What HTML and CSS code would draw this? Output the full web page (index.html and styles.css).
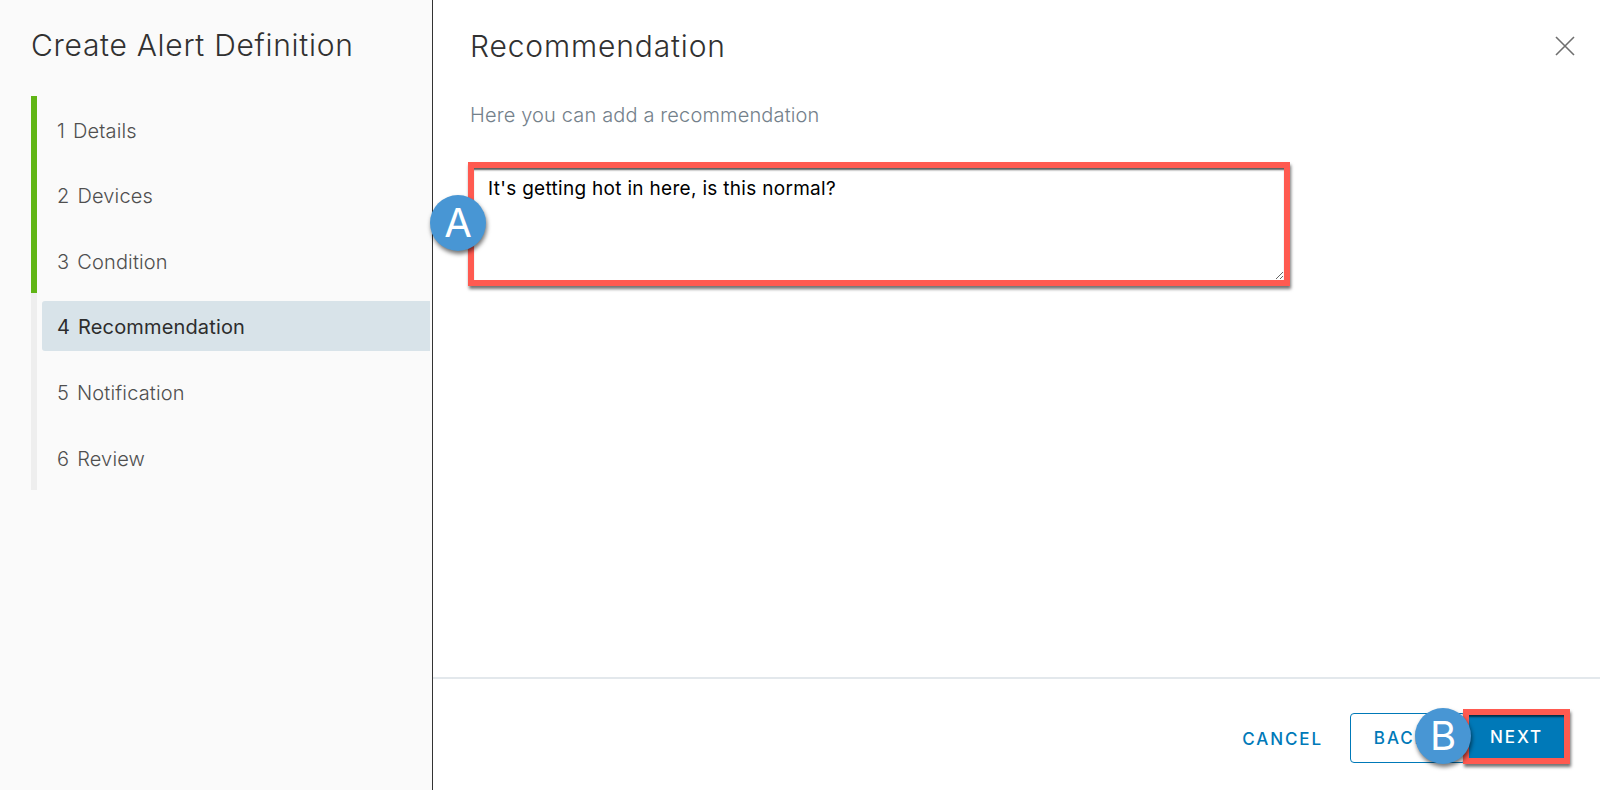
FILE: index.html
```html
<!DOCTYPE html>
<html lang="en">

<head>
    <meta charset="UTF-8">
    <title>Create Alert Definition</title>
    <link rel="stylesheet" href="styles.css">
</head>

<body>
    <div class="wizard">
        <div class="side">
            <h1 class="side-title">Create Alert Definition</h1>
            <ul class="steps">
                <li class="step done"><div class="step-in"><span class="num">1</span>Details</div></li>
                <li class="step done"><div class="step-in"><span class="num">2</span>Devices</div></li>
                <li class="step done"><div class="step-in"><span class="num">3</span>Condition</div></li>
                <li class="step current"><div class="step-in"><span class="num">4</span>Recommendation</div></li>
                <li class="step"><div class="step-in"><span class="num">5</span>Notification</div></li>
                <li class="step"><div class="step-in"><span class="num">6</span>Review</div></li>
            </ul>
        </div>
        <div class="main">
            <div class="content">
                <div class="head">
                    <h2 class="page-title">Recommendation</h2>
                    <svg class="close" width="20" height="20" viewBox="0 0 20 20">
                        <path d="M1 1L19 19M19 1L1 19" stroke="#6f6f6f" stroke-width="1.6" fill="none"/>
                    </svg>
                </div>
                <p class="hint">Here you can add a recommendation</p>
                <textarea class="box-text">It's getting hot in here, is this normal?</textarea>
            </div>
            <div class="foot">
                <button class="btn link">CANCEL</button>
                <button class="btn outline">BACK</button>
                <button class="btn primary">NEXT</button>
            </div>
        </div>
        <!-- annotation markers -->
        <div class="marker marker-a">A</div>
        <div class="marker marker-b">B</div>
    </div>
</body>

</html>
```

FILE: styles.css
```css
* {
    margin: 0;
    padding: 0;
    box-sizing: border-box;
}

ul {
    list-style: none;
}

body {
    font-family: "Inter", "Liberation Sans", sans-serif;
    background-color: #fff;
}

.wizard {
    display: flex;
    width: 1600px;
    height: 790px;
    overflow: hidden;
    position: relative;
}

.side {
    width: 433px;
    flex: none;
    padding: 26px 0 0 31px;
    background-color: #fafafa;
    border-right: 1px solid #333;
}

.side-title {
    font-size: 30px;
    line-height: 38px;
    font-weight: 300;
    letter-spacing: 0.7px;
    color: #313131;
    margin-bottom: 32px;
}

.step {
    height: 65.67px;
    padding: 8px 2px 7px 5px;
    border-left: 6px solid #eeeeee;
    font-size: 20px;
    font-weight: 300;
    letter-spacing: 0.15px;
    color: #4f4f4f;
}

.step.done {
    border-left-color: #60b515;
}

.step-in {
    display: flex;
    align-items: center;
    height: 50px;
    padding: 3px 0 0 15px;
    border-radius: 3px 0 0 3px;
}

.current .step-in {
    background-color: #d8e3e9;
    color: #2d2d2d;
    font-weight: 400;
}

.num {
    margin-right: 8px;
}

.main {
    flex: 1;
    display: flex;
    flex-direction: column;
}

.content {
    flex: 1;
    padding: 26px 25px 0 37px;
}

.head {
    display: flex;
    justify-content: space-between;
    align-items: center;
}

.page-title {
    font-size: 30px;
    line-height: 40px;
    font-weight: 300;
    letter-spacing: 0.85px;
    color: #313131;
}

.hint {
    margin-top: 35px;
    font-size: 20px;
    line-height: 28px;
    font-weight: 300;
    letter-spacing: 0.15px;
    color: #74818b;
}

.box-text {
    display: block;
    width: 822px;
    height: 124px;
    margin: 33px 0 0 -2px;
    padding: 8px 14px 6px;
    border: 6px solid #ff5a50;
    outline: none;
    box-shadow: 1px 3px 3px rgba(0, 0, 0, 0.55), inset 0 3px 2px -1px rgba(0, 0, 0, 0.65);
    font-family: "Inter", "Liberation Sans", sans-serif;
    font-size: 19px;
    line-height: 26px;
    letter-spacing: 0.3px;
    color: #000;
}

.foot {
    height: 113px;
    flex: none;
    display: flex;
    justify-content: flex-end;
    align-items: center;
    padding: 4px 30px 0 0;
    border-top: 2px solid #e3e8ec;
}

.btn {
    font-family: "Inter", "Liberation Sans", sans-serif;
    font-size: 17px;
    font-weight: 500;
    letter-spacing: 1.9px;
    background: none;
    border: none;
    color: #0079b8;
}

.link {
    margin: 4px 27px 0 0;
}

.outline {
    width: 116px;
    height: 50px;
    margin-right: -3px;
    margin-top: 2px;
    padding-right: 14px;
    background-color: #fff;
    border: 1.5px solid #0079b8;
    border-radius: 4px;
    text-align: center;
}

.primary {
    position: relative;
    width: 107px;
    height: 55px;
    background-color: #0079b8;
    border: 6px solid #ff5a50;
    color: #fff;
    box-shadow: 1px 3px 3px rgba(0, 0, 0, 0.55), inset 0 3px 2px -1px rgba(0, 0, 0, 0.6);
}

.marker {
    position: absolute;
    width: 56px;
    height: 56px;
    border-radius: 50%;
    background-color: #4896d4;
    box-shadow: 1px 3px 4px rgba(0, 0, 0, 0.55);
    color: #fff;
    font-size: 40px;
    line-height: 56px;
    text-align: center;
}

.marker-a {
    left: 430px;
    top: 195px;
}

.marker-b {
    left: 1415px;
    top: 708px;
}
```
